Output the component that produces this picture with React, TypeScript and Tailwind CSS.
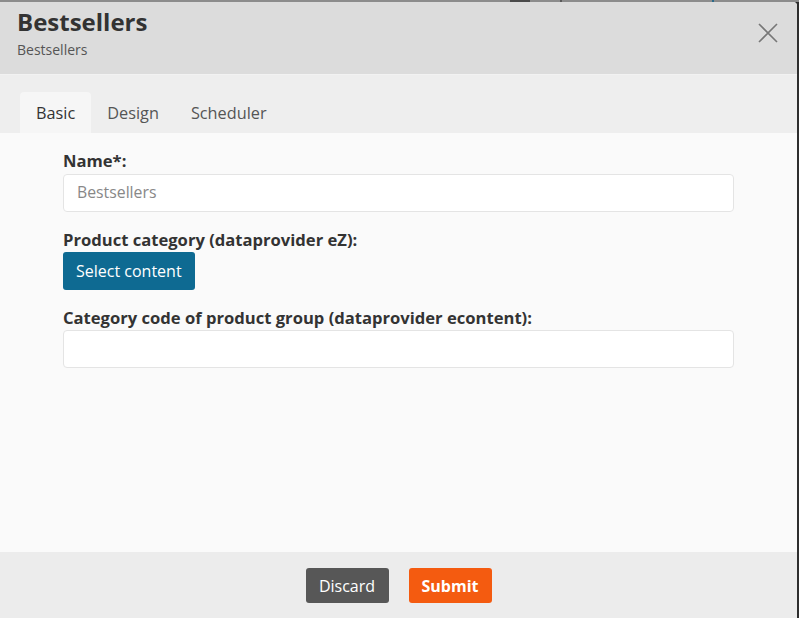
export default function App() {
  return (
    <div className="flex h-[618px] w-[799px] flex-col overflow-hidden bg-[#2e2e2e] font-['Open_Sans',sans-serif]">
      <div className="flex h-[2px] shrink-0 bg-[#8c8c8c]">
        <div className="ml-[510px] w-[20px] bg-[#4a4a4a]" />
        <div className="ml-[30px] w-[2px] bg-[#5a5a5a]" />
        <div className="ml-[150px] w-[2px] bg-[#2a6a8a]" />
      </div>
      <div className="flex min-h-0 flex-1">
        <div className="flex w-[797px] flex-col overflow-hidden rounded-tr-[4px] bg-[#fafafa]">
          <header className="flex h-[73px] shrink-0 items-start justify-between border-b border-[#f2f2f2] bg-[#dcdcdc] pl-[17px] pr-[18px]">
            <div className="pt-[4px]">
              <h1 className="text-[24px] font-bold leading-[32px] text-[#333]">Bestsellers</h1>
              <p className="mt-[2px] text-[14px] leading-[19px] text-[#555]">Bestsellers</p>
            </div>
            <button type="button" className="mt-[20px] text-[#777]" aria-label="Close">
              <svg width="22" height="22" viewBox="0 0 22 22" fill="none" stroke="currentColor" strokeWidth="1.6">
                <path d="M2 2 L20 20 M20 2 L2 20" />
              </svg>
            </button>
          </header>
          <nav className="flex h-[58px] shrink-0 items-end bg-[#eeeeee] pl-[20px]">
            <div className="flex h-[41px] items-center rounded-t-[4px] bg-[#f6f6f6] px-[16px] pt-[2px] text-[16.3px] text-[#333]">Basic</div>
            <div className="flex h-[41px] items-center px-[16px] pt-[2px] text-[16.3px] text-[#555]">Design</div>
            <div className="flex h-[41px] items-center px-[16px] pt-[2px] text-[16.3px] text-[#555]">Scheduler</div>
          </nav>
          <main className="flex flex-1 flex-col px-[63px] pt-[17px]">
            <label className="text-[16.6px] font-bold leading-[22px] text-[#333]">Name*:</label>
            <div className="mt-[2px] flex h-[38px] items-center rounded-[4px] border border-[#e4e4e4] bg-white px-[13px] text-[15.8px] text-[#888]">
              Bestsellers
            </div>
            <label className="mt-[17px] text-[16.6px] font-bold leading-[22px] text-[#333]">Product category (dataprovider eZ):</label>
            <div>
              <button type="button" className="mt-[1px] h-[38px] rounded-[3px] bg-[#0e6a92] px-[13px] text-[16px] text-white">
                Select content
              </button>
            </div>
            <label className="mt-[17px] text-[16.6px] font-bold leading-[21px] text-[#333]">
              Category code of product group (dataprovider econtent):
            </label>
            <div className="mt-[2px] h-[38px] rounded-[4px] border border-[#e4e4e4] bg-white" />
          </main>
          <footer className="flex h-[66px] shrink-0 items-start justify-center gap-[20px] bg-[#ececec] pt-[16px]">
            <button type="button" className="h-[35px] w-[83px] rounded-[3px] bg-[#575757] text-[16px] text-white">
              Discard
            </button>
            <button type="button" className="h-[35px] w-[83px] rounded-[3px] bg-[#f45b10] text-[16px] font-bold text-white">
              Submit
            </button>
          </footer>
        </div>
      </div>
    </div>
  );
}
